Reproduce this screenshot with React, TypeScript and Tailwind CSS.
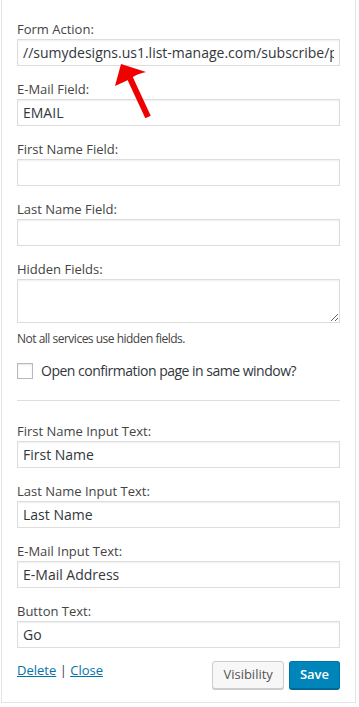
import React from "react";

const font = { fontFamily: '"Open Sans", "Noto Sans", Arial, sans-serif' };

const Field = ({
  label,
  value,
  first,
}: {
  label: string;
  value?: string;
  first?: boolean;
}) => (
  <div className={first ? "" : "mt-[14px]"}>
    <label className="block text-[13px] leading-[18px] text-[#444]">{label}</label>
    <input
      type="text"
      defaultValue={value}
      className="mt-[1px] block h-[27px] w-full border border-[#ddd] bg-white px-[5px] text-[14px] text-[#32373c] shadow-[inset_0_1px_2px_rgba(0,0,0,0.07)] outline-none"
    />
  </div>
);

const App = () => {
  return (
    <div className="min-h-[707px] w-[359px] bg-white" style={font}>
      <div className="relative ml-[1px] w-[355px] border-x border-b border-[#e5e5e5] px-[15px] pt-[20px] pb-[13px]">
        <Field
          first
          label="Form Action:"
          value="//sumydesigns.us1.list-manage.com/subscribe/post?u=8f2b"
        />
        <Field label="E-Mail Field:" value="EMAIL" />
        <Field label="First Name Field:" />
        <Field label="Last Name Field:" />

        <div className="mt-[14px]">
          <label className="block text-[13px] leading-[18px] text-[#444]">
            Hidden Fields:
          </label>
          <textarea className="mt-[1px] block h-[44px] w-full border border-[#ddd] bg-white px-[5px] text-[14px] text-[#32373c] shadow-[inset_0_1px_2px_rgba(0,0,0,0.07)] outline-none" />
        </div>
        <p className="mt-[7px] text-[12px] leading-[17px] tracking-[-0.5px] text-[#444]">
          Not all services use hidden fields.
        </p>

        <label className="mt-[14px] flex items-center gap-[8px] text-[14px] leading-[20px] tracking-[-0.5px] text-[#32373c]">
          <span className="block h-[16px] w-[16px] border border-[#b4b9be] bg-white shadow-[inset_0_1px_2px_rgba(0,0,0,0.1)]" />
          Open confirmation page in same window?
        </label>

        <div className="mt-[19px] h-px bg-[#ddd]" />

        <div className="mt-[21px]">
          <Field first label="First Name Input Text:" value="First Name" />
          <Field label="Last Name Input Text:" value="Last Name" />
          <Field label="E-Mail Input Text:" value="E-Mail Address" />
          <Field label="Button Text:" value="Go" />
        </div>

        <div className="mt-[13px] flex items-start justify-between">
          <div className="text-[13px] leading-[18px] text-[#444]">
            <a href="#" className="text-[#0073aa] underline">
              Delete
            </a>{" "}
            |{" "}
            <a href="#" className="text-[#0073aa] underline">
              Close
            </a>
          </div>
          <div className="flex gap-[5px]">
            <button className="h-[28px] rounded-[3px] border border-[#ccc] bg-[#f7f7f7] px-[10px] text-[13px] text-[#555] shadow-[0_1px_0_#ccc]">
              Visibility
            </button>
            <button className="h-[28px] rounded-[3px] border border-[#0073aa] border-b-[#006799] bg-[#0085ba] px-[10px] text-[13px] font-semibold text-white shadow-[0_1px_0_#006799]">
              Save
            </button>
          </div>
        </div>

        {/* red annotation arrow */}
        <svg
          className="pointer-events-none absolute left-[-1px] top-0"
          width="200"
          height="140"
          viewBox="0 0 200 140"
        >
          <path d="M120 64 L145 72 Q135 74 129 79 Q123 82 114 86 Z" fill="#f00000" />
          <line x1="128" y1="76" x2="147" y2="117" stroke="#f00000" strokeWidth="6" />
        </svg>
      </div>
    </div>
  );
};

export default App;
